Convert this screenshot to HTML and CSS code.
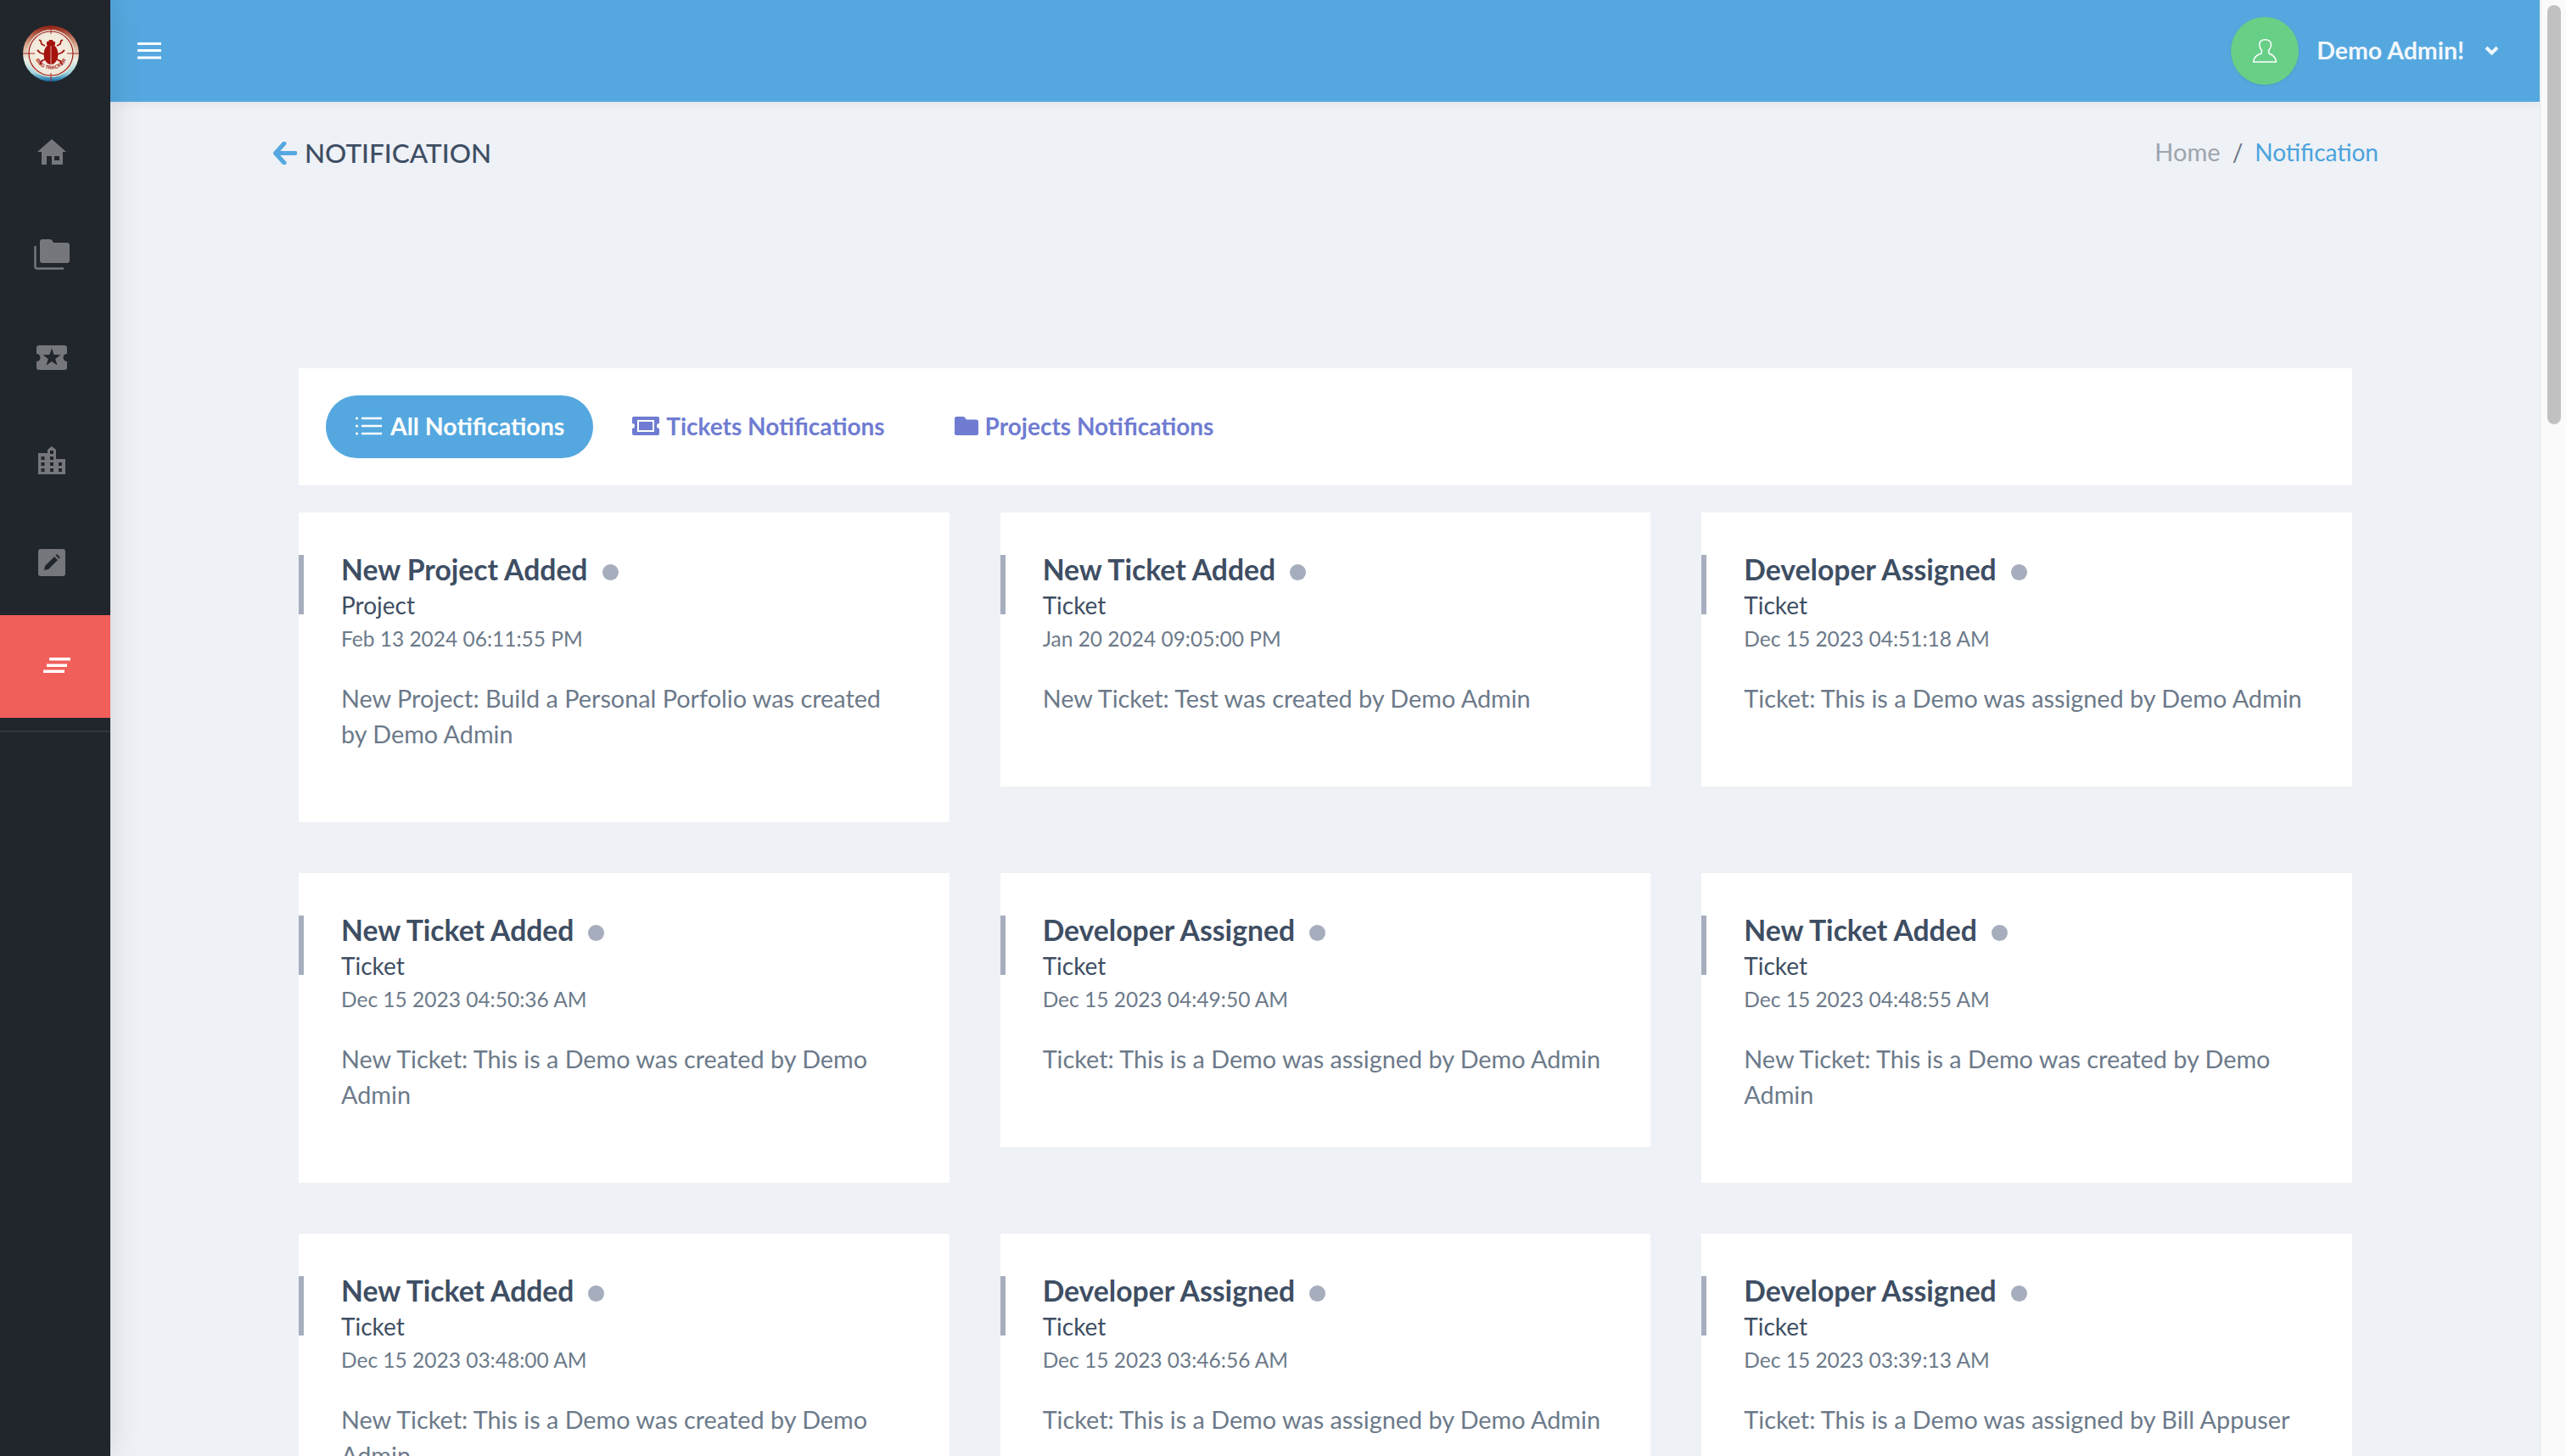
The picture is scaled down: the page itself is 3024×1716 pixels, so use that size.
FILE: index.html
```html
<!DOCTYPE html>
<html lang="en">
<head>
<meta charset="utf-8">
<title>Notification</title>
<link rel="stylesheet" href="styles.css">
</head>
<body>
<div class="app">
  <aside class="sidebar">
    <div class="brand">
      <svg class="logo" viewBox="0 0 66 66">
        <defs>
          <radialGradient id="lg" cx="50%" cy="50%" r="50%">
            <stop offset="0" stop-color="#f6efe0"/><stop offset=".72" stop-color="#f3ebdc"/><stop offset="1" stop-color="#e8e4da"/>
          </radialGradient>
          <linearGradient id="rim" x1="0" y1="0" x2="0" y2="1">
            <stop offset="0" stop-color="#8f1f12"/><stop offset=".35" stop-color="#d9a98e"/><stop offset=".62" stop-color="#eef0e6"/><stop offset=".85" stop-color="#9fd4dc"/><stop offset="1" stop-color="#0f6aa5"/>
          </linearGradient>
          <path id="arc" d="M14 38 A20 20 0 0 0 52 38"/>
        </defs>
        <circle cx="33" cy="33" r="33" fill="url(#rim)"/>
        <circle cx="33" cy="33" r="28" fill="url(#lg)"/>
        <circle cx="33" cy="33" r="26" fill="none" stroke="#a01a12" stroke-width="1.2"/>
        <path d="M33 0V10M33 56V66M0 33H14M52 33H66" stroke="#a01a12" stroke-width=".9"/>
        <ellipse cx="33" cy="34" rx="8.5" ry="12" fill="#a5130f"/>
        <path d="M28 19h2l1-2h4l1 2h2v4q-5 3-10 0z" fill="#a5130f"/>
        <path d="M26 24l-4-2-1-4-2-1M40 24l4-2 1-4 2-1M25 34l-5-2-3-3M41 34l5-2 3-3M26 40l-4 2-2 4M40 40l4 2 2 4" fill="none" stroke="#a5130f" stroke-width="1.8"/>
        <path d="M33 24V46" stroke="#f3ebdc" stroke-width=".7"/>
        <text class="logo-text"><textPath href="#arc" startOffset="50%" text-anchor="middle">BUG TRACKER</textPath></text>
      </svg>
    </div>
    <nav class="nav">
      <a class="nav-item"><svg class="ic" width="34" height="30" viewBox="0 0 34 30"><path fill-rule="evenodd" d="M17 0L34 15H30V30H17V20H11V30H5V15H0ZM20 20V25H26V20Z"/></svg></a>
      <a class="nav-item"><svg class="ic" width="42" height="36" viewBox="0 0 42 36"><path d="M10 0H19Q21 0 22 2L23 4H39Q42 4 42 7V25Q42 28 39 28H10Q7 28 7 25V3Q7 0 10 0Z"/><path class="ic-line" d="M1.5 8V32Q1.5 34.5 4 34.5H35"/></svg></a>
      <a class="nav-item"><svg class="ic" width="36" height="29" viewBox="0 0 36 29"><path fill-rule="evenodd" d="M3 0H33Q36 0 36 3V10A4.5 4.5 0 0 0 36 19V26Q36 29 33 29H3Q0 29 0 26V19A4.5 4.5 0 0 0 0 10V3Q0 0 3 0ZM18 3.5L20.6 11L28.5 11.3L22.2 16L24.5 23.5L18 19L11.5 23.5L13.8 16L7.5 11.3L15.4 11Z"/></svg></a>
      <a class="nav-item"><svg class="ic" width="32" height="33" viewBox="0 0 32 33"><path fill-rule="evenodd" d="M16 0L21 4V15H32V33H0V8H11V4ZM14 5h4v4h-4zM3.500 12h4v4h-4zM14 12h4v4h-4zM3.500 19h4v4h-4zM14 19h4v4h-4zM24 19h4v4h-4zM3.500 26h4v4h-4zM14 26h4v4h-4zM24 26h4v4h-4z"/></svg></a>
      <a class="nav-item"><svg class="ic" width="32" height="32" viewBox="0 0 32 32"><path fill-rule="evenodd" d="M3 0H29Q32 0 32 3V29Q32 32 29 32H3Q0 32 0 29V3Q0 0 3 0ZM7 25L8 20L19 9L23 13L12 24ZM20.500 7.500L22 6L26 10L24.500 11.500Z"/></svg></a>
      <a class="nav-item nav-active"><svg class="ic-bars" width="32" height="18" viewBox="0 0 32 18"><path d="M7 0H32V3.500H7ZM4 7.500H28V11H4ZM0 14.500H25V18H0Z"/></svg></a>
    </nav>
    <div class="nav-rule"></div>
  </aside>

  <main class="main">
    <header class="topbar">
      <svg class="burger" width="28" height="20" viewBox="0 0 28 20"><path d="M0 1.500H28M0 9.500H28M0 18H28"/></svg>
      <div class="user">
        <span class="avatar"><svg class="person" width="28" height="28" viewBox="0 0 28 28"><path d="M14.500.8C10 .8 7.500 3 7.800 7C8 10 9 12 10.500 14L10 17C5 18.500 1 21 .5 27H27.500C27 21 23 18.500 19 17L18.500 14C20 12 21.500 10 21.500 7C21.500 3 19 .8 14.500 .8Z"/></svg></span>
        <span class="user-name">Demo Admin!</span>
        <svg class="chev" width="17" height="11" viewBox="0 0 17 11"><path d="M2 2L8.500 8.500L15 2"/></svg>
      </div>
    </header>

    <div class="page-head">
      <h1 class="page-title"><svg class="back" width="28" height="27" viewBox="0 0 28 27"><path d="M26 13.500H3M13 2L2.500 13.500L13 25"/></svg>NOTIFICATION</h1>
      <div class="crumbs"><span class="crumb-home">Home</span><span class="crumb-sep">/</span><span class="crumb-cur">Notification</span></div>
    </div>

    <section class="content">
      <div class="tabs">
        <a class="tab tab-on"><svg class="tab-ic list-ic" width="31" height="22" viewBox="0 0 31 22"><path d="M8 2H31M8 11H31M8 20H31"/><path class="dots" d="M1.500 2H1.600M1.500 11H1.600M1.500 20H1.600"/></svg>All Notifications</a>
        <a class="tab"><svg class="tab-ic" width="32" height="22" viewBox="0 0 32 22"><path fill-rule="evenodd" d="M2 0H30Q32 0 32 2V8A3 3 0 0 0 32 14V20Q32 22 30 22H2Q0 22 0 20V14A3 3 0 0 0 0 8V2Q0 0 2 0ZM6 4V18H26V4ZM8 6H24V16H8Z"/></svg>Tickets Notifications</a>
        <a class="tab"><svg class="tab-ic" width="28" height="22" viewBox="0 0 28 22"><path d="M2.500 0H10Q11.500 0 12.500 1.500L14 3.500H25.500Q28 3.500 28 6V19.500Q28 22 25.500 22H2.500Q0 22 0 19.500V2.500Q0 0 2.500 0Z"/></svg>Projects Notifications</a>
      </div>

      <div class="grid">
        <article class="card"><h2 class="card-title">New Project Added<i class="dot"></i></h2><div class="card-type">Project</div><div class="card-date">Feb 13 2024 06:11:55 PM</div><p class="card-msg">New Project: Build a Personal Porfolio was created by Demo Admin</p></article>
        <article class="card"><h2 class="card-title">New Ticket Added<i class="dot"></i></h2><div class="card-type">Ticket</div><div class="card-date">Jan 20 2024 09:05:00 PM</div><p class="card-msg">New Ticket: Test was created by Demo Admin</p></article>
        <article class="card"><h2 class="card-title">Developer Assigned<i class="dot"></i></h2><div class="card-type">Ticket</div><div class="card-date">Dec 15 2023 04:51:18 AM</div><p class="card-msg">Ticket: This is a Demo was assigned by Demo Admin</p></article>

        <article class="card"><h2 class="card-title">New Ticket Added<i class="dot"></i></h2><div class="card-type">Ticket</div><div class="card-date">Dec 15 2023 04:50:36 AM</div><p class="card-msg">New Ticket: This is a Demo was created by Demo Admin</p></article>
        <article class="card"><h2 class="card-title">Developer Assigned<i class="dot"></i></h2><div class="card-type">Ticket</div><div class="card-date">Dec 15 2023 04:49:50 AM</div><p class="card-msg">Ticket: This is a Demo was assigned by Demo Admin</p></article>
        <article class="card"><h2 class="card-title">New Ticket Added<i class="dot"></i></h2><div class="card-type">Ticket</div><div class="card-date">Dec 15 2023 04:48:55 AM</div><p class="card-msg">New Ticket: This is a Demo was created by Demo Admin</p></article>

        <article class="card"><h2 class="card-title">New Ticket Added<i class="dot"></i></h2><div class="card-type">Ticket</div><div class="card-date">Dec 15 2023 03:48:00 AM</div><p class="card-msg">New Ticket: This is a Demo was created by Demo Admin</p></article>
        <article class="card"><h2 class="card-title">Developer Assigned<i class="dot"></i></h2><div class="card-type">Ticket</div><div class="card-date">Dec 15 2023 03:46:56 AM</div><p class="card-msg">Ticket: This is a Demo was assigned by Demo Admin</p></article>
        <article class="card"><h2 class="card-title">Developer Assigned<i class="dot"></i></h2><div class="card-type">Ticket</div><div class="card-date">Dec 15 2023 03:39:13 AM</div><p class="card-msg">Ticket: This is a Demo was assigned by Bill Appuser</p></article>
      </div>
    </section>
  </main>

  <div class="scrollbar"><div class="scroll-thumb"></div></div>
</div>
</body>
</html>
```
FILE: styles.css
```css
* { box-sizing: border-box; }
html, body { margin: 0; height: 100%; overflow: hidden; }
body { font-family: "Lato", "Noto Sans", sans-serif; background: #eef1f6; color: #3e4e63; }

.app { display: flex; height: 1716px; }

/* sidebar */
.sidebar { width: 130px; flex: none; background: #21252c; position: relative; z-index: 2; box-shadow: 0 0 36px rgba(0,0,0,.13); }
.brand { height: 120px; padding: 30px 0 0 27px; }
.logo { display: block; width: 66px; height: 66px; }
.logo-text { font: 700 6px "Liberation Sans", sans-serif; fill: #a5130f; }
.nav { display: flex; flex-direction: column; }
.nav-item { height: 121px; display: flex; align-items: center; justify-content: center; padding: 0 8px 3px 0; }
.ic { fill: #75777c; }
.ic-line { fill: none; stroke: #75777c; stroke-width: 2.5; }
.nav-active { background: #f15f5b; padding: 0 0 3px 4px; }
.ic-bars { fill: #fff; }
.nav-rule { height: 2px; background: #33363b; margin-top: 15px; }

/* main */
.main { flex: 1; min-width: 0; overflow: hidden; }
.topbar { height: 120px; background: #55a8df; display: flex; align-items: center; justify-content: space-between; padding: 0 48px 0 32px; position: relative; box-shadow: 0 0 14px rgba(0,0,0,.08); }
.burger { fill: none; stroke: #fff; stroke-width: 3; }
.user { display: flex; align-items: center; }
.avatar { width: 80px; height: 80px; border-radius: 50%; background: #68cf87; display: flex; align-items: center; justify-content: center; margin-right: 21px; box-shadow: 0 1px 3px rgba(0,0,0,.1); }
.person { fill: none; stroke: #fff; stroke-width: 1.5; }
.user-name { font-size: 28.5px; font-weight: 700; color: #f1f7fc; line-height: 40px; margin-top: -2px; }
.chev { fill: none; stroke: #f1f7fc; stroke-width: 4; margin-left: 24px; margin-top: -2px; }

.page-head { display: flex; justify-content: space-between; align-items: flex-start; padding: 39px 190px 0 192px; height: 314px; }
.page-title { margin: 0; font-size: 31.5px; font-weight: 500; line-height: 42px; color: #3e4e63; display: flex; align-items: center; }
.back { fill: none; stroke: #55a8df; stroke-width: 5; stroke-linecap: round; stroke-linejoin: round; margin-right: 9px; }
.crumbs { line-height: 42px; display: flex; align-items: baseline; margin-top: -1px; }
.crumb-home { color: #9ea4ad; font-size: 29px; }
.crumb-sep { color: #6c7480; margin: 0 14px; font-size: 28px; }
.crumb-cur { color: #4ba3dd; font-size: 28px; }

.content { padding: 0 221px 0 222px; }
.tabs { background: #fff; height: 138px; padding: 32px; display: flex; align-items: center; gap: 10px; margin-bottom: 32px; }
.tab { height: 74px; display: flex; align-items: center; color: #6f7cd1; font-size: 28px; font-weight: 700; padding: 0 36px 2px; border-radius: 37px; }
.tab-on { background: #55a8df; color: #fff; font-size: 28.500px; padding: 0 34px 2px 35px; }
.tab-ic { fill: #6f7cd1; margin-right: 8px; flex: none; }
.list-ic { fill: none; stroke: #fff; stroke-width: 2.500; stroke-linecap: round; margin-right: 10px; }
.dots { stroke-width: 3; }

.grid { display: grid; grid-template-columns: repeat(3, 1fr); column-gap: 60px; row-gap: 60px; align-items: start; }
.card { background: #fff; padding: 42px 50px 83px; position: relative; }
.card::before { content: ""; position: absolute; left: 0; top: 50px; width: 6px; height: 70px; background: #a6adbd; }
.card-title { margin: 0; font-size: 33.7px; font-weight: 700; line-height: 50px; color: #3e4e63; display: flex; align-items: center; }
.dot { width: 19px; height: 19px; border-radius: 50%; background: #a6adbd; margin: 6px 0 0 17px; flex: none; }
.card-type { font-size: 28px; line-height: 36px; color: #3e4e63; margin-top: -1px; }
.card-date { font-size: 24.500px; line-height: 40px; color: #6c7a8a; margin-top: 2px; }
.card-msg { margin: 29px 0 0; font-size: 28.8px; line-height: 42px; color: #6c7a8a; }

/* window scrollbar, painted beside the page */
.scrollbar { width: 31px; flex: none; background: #fafafa; border-left: 2px solid #eceff2; padding: 6px 6px 0 7px; }
.scroll-thumb { height: 494px; background: #c1c1c1; border-radius: 8px; }
```
